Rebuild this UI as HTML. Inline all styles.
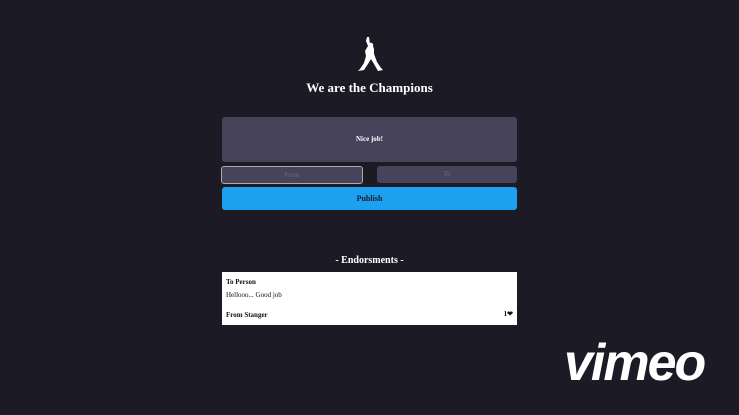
<!DOCTYPE html>
<html><head><style>
body{margin:0;width:739px;height:415px;background:#1c1b25;font-family:"Liberation Serif",serif;position:relative;overflow:hidden}
.a{position:absolute}
.t{left:0;width:739px;text-align:center;color:#fff;font-weight:bold}
</style></head><body>
<svg class="a" style="left:356px;top:36px" width="28" height="36" viewBox="0 0 28 36">
<path fill="#fff" d="M11 1 L13 1 L14 8 L17 10 L18 13 L18 18 L21 26 L25 32 L27 34 L22 35 L18 28 L15 23 L12 28 L8 34 L2 35 L4 33 L8 27 L10 20 L9 15 L12 10 L10 5 Z"/>
<circle cx="15" cy="9" r="2.2" fill="#fff"/>
</svg>
<div class="a t" style="top:80px;font-size:13px">We are the Champions</div>
<div class="a" style="left:222px;top:117px;width:295px;height:45px;background:#47435a;border-radius:3px"></div>
<div class="a t" style="top:135px;font-size:7px">Nice job!</div>
<div class="a" style="left:221px;top:166px;width:140px;height:16px;background:#47435a;border:1px solid #aaa;border-radius:3px;color:#6e6a80;font-size:7px;text-align:center;line-height:16px">From</div>
<div class="a" style="left:377px;top:166px;width:140px;height:17px;background:#47435a;border-radius:3px;color:#6e6a80;font-size:7px;text-align:center;line-height:17px">To</div>
<div class="a" style="left:222px;top:187px;width:295px;height:23px;background:#1ca1f1;border-radius:3px;font-size:8px;font-weight:bold;text-align:center;line-height:23px;color:#1c1b25">Publish</div>
<div class="a t" style="top:255px;font-size:10px">- Endorsments -</div>
<div class="a" style="left:222px;top:272px;width:295px;height:53px;background:#fff;font-size:7px;color:#111">
<div class="a" style="left:4px;top:6px;font-weight:bold">To Person</div>
<div class="a" style="left:4px;top:19px">Hellooo... Good job</div>
<div class="a" style="left:4px;top:39px;font-weight:bold">From Stanger</div>
<div class="a" style="right:4px;top:38px;font-weight:bold">1&#10084;</div>
</div>
<div class="a" style="left:564px;top:333px;color:#fff;font-family:'Liberation Sans',sans-serif;font-weight:bold;font-style:italic;font-size:52px;letter-spacing:-2px">vimeo</div>
</body></html>
